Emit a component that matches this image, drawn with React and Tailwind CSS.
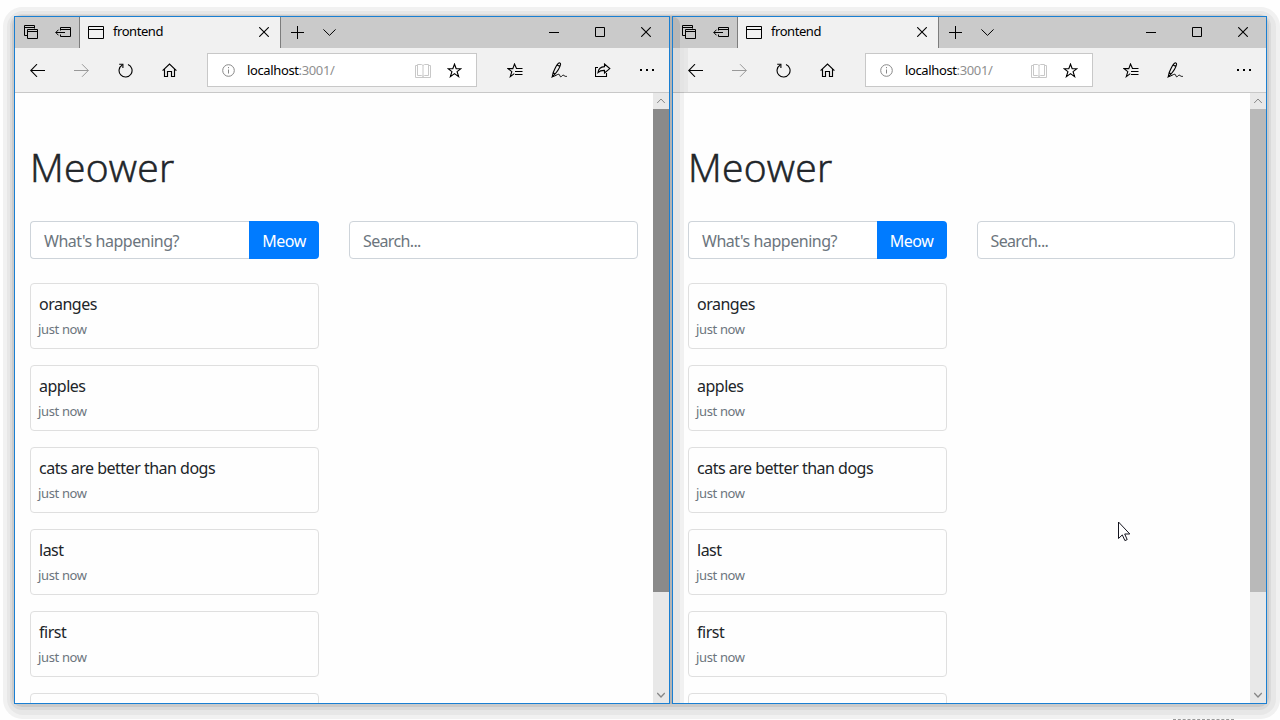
import React from "react";

const S = ({ w, h, children, className = "" }) => (
  <svg
    width={w}
    height={h}
    viewBox={`0 0 ${w} ${h}`}
    fill="none"
    stroke="currentColor"
    strokeWidth="1"
    className={`shrink-0 ${className}`}
  >
    {children}
  </svg>
);

const TabsAside = () => (
  <S w={14} h={14}>
    <path d="M3.5 10.5H.5V.5h10v3M.5 2.5h10" />
    <path d="M3.5 4.5h10v9h-10zM3.5 6.5h10" />
  </S>
);
const SetAside = () => (
  <S w={16} h={11}>
    <path d="M5.5 3.5V.5h10v9h-10v-2M5.5 2.5h10M.8 5.5H10M3.5 2.7L.8 5.5l2.700 2.800" />
  </S>
);
const PageIcon = () => (
  <S w={16} h={13}>
    <path d="M.5.500h15v12H.5zM.5 3.500h15" />
  </S>
);
const Cross = () => (
  <S w={10} h={10}>
    <path d="M.2.2l9.600 9.600M9.800.2L.2 9.800" strokeWidth="1.100" />
  </S>
);
const Plus = () => (
  <S w={13} h={13}>
    <path d="M6.500 0v13M0 6.500h13" />
  </S>
);
const ChevronDown = () => (
  <S w={13} h={7}>
    <path d="M.4.400l6.100 6 6.100-6" />
  </S>
);
const Back = () => (
  <S w={15} h={13}>
    <path d="M.7 6.500H15M7 .2L.7 6.500 7 12.800" strokeWidth="1.100" />
  </S>
);
const Forward = () => (
  <S w={15} h={13}>
    <path d="M0 6.500h14.300M8 .2l6.300 6.300L8 12.800" />
  </S>
);
const Refresh = () => (
  <S w={15} h={15}>
    <path d="M10 1.500A6.500 6.500 0 1 1 4.300 1.900" strokeWidth="1.100" />
    <path d="M1.200 1.200h3.700v3.700" strokeWidth="1.100" />
  </S>
);
const Home = () => (
  <S w={15} h={15}>
    <path d="M.6 7.600L7.500 1l6.900 6.600M2.500 6v7.500h3v-5h4v5h3V6" strokeWidth="1.150" />
  </S>
);
const Info = () => (
  <S w={13} h={13}>
    <circle cx="6.500" cy="6.500" r="5.800" />
    <path d="M6.500 5.500v4M6.500 3v1.200" />
  </S>
);
const Book = () => (
  <S w={16} h={15}>
    <path d="M2.500 1.500h4l1.500 1 1.500-1h4v11h-4l-1.500 1-1.500-1h-4zM8 2.500v11" />
    <path d="M2.500 2.500h-2v12h15v-12h-2" />
  </S>
);
const Star = () => (
  <S w={15} h={15}>
    <path
      d="M7.500 1.200l1.700 4.500h4.700l-3.800 2.900 1.500 5-4.100-3-4.100 3 1.500-5-3.800-2.900h4.700z"
      strokeWidth="1.150"
    />
  </S>
);
const Hub = () => (
  <S w={16} h={15}>
    <path d="M9.500 5.500L7.500 1 5.800 5.600H1l3.800 3-1.500 5 4-3" strokeWidth="1.100" />
    <path d="M9 5.500h6.500M8 8.500h7.500M8 11.500h7.500" />
  </S>
);
const Pen = () => (
  <S w={16} h={16}>
    <path
      d="M1.200 14.800l1-4.300C4 6.500 5.500 2.500 7.500 1.200c1.300-.7 2.300.1 2 1.500C8.700 6 5.800 10.200 3.300 12.800l-2.100 2zM6.300 2.500c.3 1 1.800 1.700 2.900 1.300M2.200 10.500l1.500 1.500"
      strokeWidth="1.100"
    />
    <path d="M1.500 14.700C4.500 14.200 6 12.200 7.700 12.300c1.500.1.700 2.300 1.900 2.400 1.200.1 1.500-1.500 2.700-1.500 1.200.1 1.200 1.500 3.500 1.200" />
  </S>
);
const Share = () => (
  <S w={16} h={15}>
    <path d="M3 4.500H.5v9h11v-3.500" strokeWidth="1.100" />
    <path d="M3 9.500C3.500 5.500 6 3.700 9.500 3.600V1l5.300 4.600L9.500 10V7.400C6.500 7.300 4.700 7.800 3 9.500z" strokeWidth="1.100" />
  </S>
);
const Dots = () => (
  <S w={14} h={2}>
    <path d="M0 1h2M6 1h2M12 1h2" strokeWidth="2" />
  </S>
);

const Slot = ({ className = "w-11", children }) => (
  <div className={`flex h-full shrink-0 items-center justify-center ${className}`}>{children}</div>
);

const TitleBar = () => (
  <div className="flex h-[31px] shrink-0 bg-[#cacaca] text-black">
    <Slot className="w-8 pb-px"><TabsAside /></Slot>
    <Slot className="w-8 pb-px"><SetAside /></Slot>
    <div className="flex w-[202px] shrink-0 items-center border-x border-[#7d7d7d] bg-[#f1f1f1] pb-px pl-2">
      <PageIcon />
      <span className="ml-[9px] flex-1 pb-[2px] text-[13px] leading-[18px] tracking-[-0.45px]">frontend</span>
      <span className="mr-[11px]"><Cross /></span>
    </div>
    <Slot className="w-[33px]"><Plus /></Slot>
    <Slot className="w-[31px]"><ChevronDown /></Slot>
    <div className="flex-1" />
    <Slot className="w-[46px]"><S w={10} h={1}><path d="M0 .5h10" /></S></Slot>
    <Slot className="w-[46px] pb-px"><S w={10} h={10}><path d="M.5.5h9v9h-9z" /></S></Slot>
    <Slot className="w-[46px] pb-px"><Cross /></Slot>
  </div>
);

const ToolBar = ({ share }) => (
  <div className="flex h-[45px] shrink-0 items-center border-b border-[#c8c8c8] bg-[#f1f1f1] text-black">
    <Slot><Back /></Slot>
    <Slot className="w-11 text-[#999]"><Forward /></Slot>
    <Slot><Refresh /></Slot>
    <Slot><Home /></Slot>
    <div className="ml-4 flex h-[34px] flex-1 items-center border border-[#c8c8c8] bg-white pl-[14px]">
      <span className="text-[#888]"><Info /></span>
      <span className="ml-3 flex-1 text-[13px] leading-[18px] tracking-[-0.37px]">
        localhost<span className="text-[#8f8f8f]">:3001/</span>
      </span>
      <span className="text-[#c8c8c8]"><Book /></span>
      <span className="mr-[14px] ml-4"><Star /></span>
    </div>
    <Slot className="ml-4 w-11"><Hub /></Slot>
    <Slot><Pen /></Slot>
    {share ? <Slot><Share /></Slot> : <div className="w-[25px]" />}
    <Slot><Dots /></Slot>
  </div>
);

const meows = ["oranges", "apples", "cats are better than dogs", "last", "first"];

const Page = () => (
  <div className="min-w-0 flex-1 px-[15px] text-[#212529]">
    <h1 className="mt-[46px] h-[58px] font-['Open_Sans','Noto_Sans',sans-serif] text-[39px] leading-[56px] font-light tracking-[0.3px] [-webkit-text-stroke:0.6px_#212529]">
      Meower
    </h1>
    <div className="mt-6 grid grid-cols-2 gap-[30px] text-[16px] text-[#6c757d]">
      <div className="flex h-[38px]">
        <div className="flex flex-1 items-center rounded-l border border-r-0 border-[#ced4da] bg-white pt-0.5 pl-[13px] tracking-[-0.47px]">
          What's happening?
        </div>
        <div className="flex w-[70px] items-center justify-center rounded-r bg-[#007bff] pt-0.5 tracking-[-0.5px] text-white">
          Meow
        </div>
      </div>
      <div className="flex h-[38px] items-center rounded border border-[#ced4da] bg-white pt-0.5 pl-[13px] tracking-[-0.65px]">
        Search...
      </div>
    </div>
    <div className="mt-6 grid grid-cols-2 gap-[30px]">
      <div className="flex flex-col gap-4">
        {meows.map((m) => (
          <div key={m} className="h-[66px] rounded border border-[#dfdfdf] px-2 pt-2">
            <p className="text-[16px] leading-6 tracking-[-0.5px]">{m}</p>
            <p className="mt-px -ml-px text-[13px] leading-6 tracking-[-0.36px] text-[#6c757d]">just now</p>
          </div>
        ))}
        <div className="h-[66px] rounded border border-[#dfdfdf]" />
      </div>
    </div>
  </div>
);

const ScrollBar = ({ active }) => (
  <div className="flex w-4 shrink-0 flex-col bg-[#e8e8e8] text-[#868686]">
    <div className="flex h-4 items-center justify-center">
      <S w={8} h={6}><path d="M.2 5L4 1l3.800 4" /></S>
    </div>
    <div className={`h-[483px] ${active ? "bg-[#8a8a8a]" : "bg-[#b9b9b9]"}`} />
    <div className="flex-1" />
    <div className="flex h-4 items-center justify-center">
      <S w={8} h={6}><path d="M.2 1L4 5l3.800-4" strokeWidth="1.300" /></S>
    </div>
  </div>
);

const Window = ({ className, share, active }) => (
  <section className={`flex h-[688px] shrink-0 flex-col overflow-hidden border border-[#1a7fd2] bg-[#fefefe] ${className}`}>
    <TitleBar />
    <ToolBar share={share} />
    <div className="flex min-h-0 flex-1 overflow-hidden">
      <Page />
      <ScrollBar active={active} />
    </div>
  </section>
);

export default function App() {
  return (
    <main className="relative h-[720px] w-[1280px] overflow-hidden bg-[#fefefe] pt-4 pl-[14px] font-['Noto_Sans','Open_Sans',sans-serif]">
      <div className="flex h-[688px] w-[1253px] gap-0.5 rounded-[8px] bg-[#b4b4b4] shadow-[0_1px_0_2px_#cacaca,0_2px_0_4px_#dadada,1px_3px_0_8px_#e7e7e7,1px_3px_0_12px_#f1f1f1]">
        <Window className="w-[656px]" share active />
        <div className="relative flex">
          <Window className="w-[595px]" />
          <div className="absolute top-px left-px h-[686px] w-[7px] rounded-tr-[7px] bg-black/9" />
          <div className="absolute top-[32px] left-2 h-[655px] w-1 bg-black/5" />
          <div className="absolute top-[32px] left-3 h-[44px] w-1 bg-black/4" />
        </div>
      </div>
      <div className="absolute top-[719px] left-[1173px] w-[61px] border-t border-dashed border-[#999]" />
      <svg className="absolute top-[521px] left-[1118px]" width="13" height="21" viewBox="0 0 13 21">
        <path d="M.5 1v16.500l3.800-3.600 2.600 5.700 2.300-1-2.500-5.600h5.100z" fill="#fff" stroke="#15151f" />
      </svg>
    </main>
  );
}
